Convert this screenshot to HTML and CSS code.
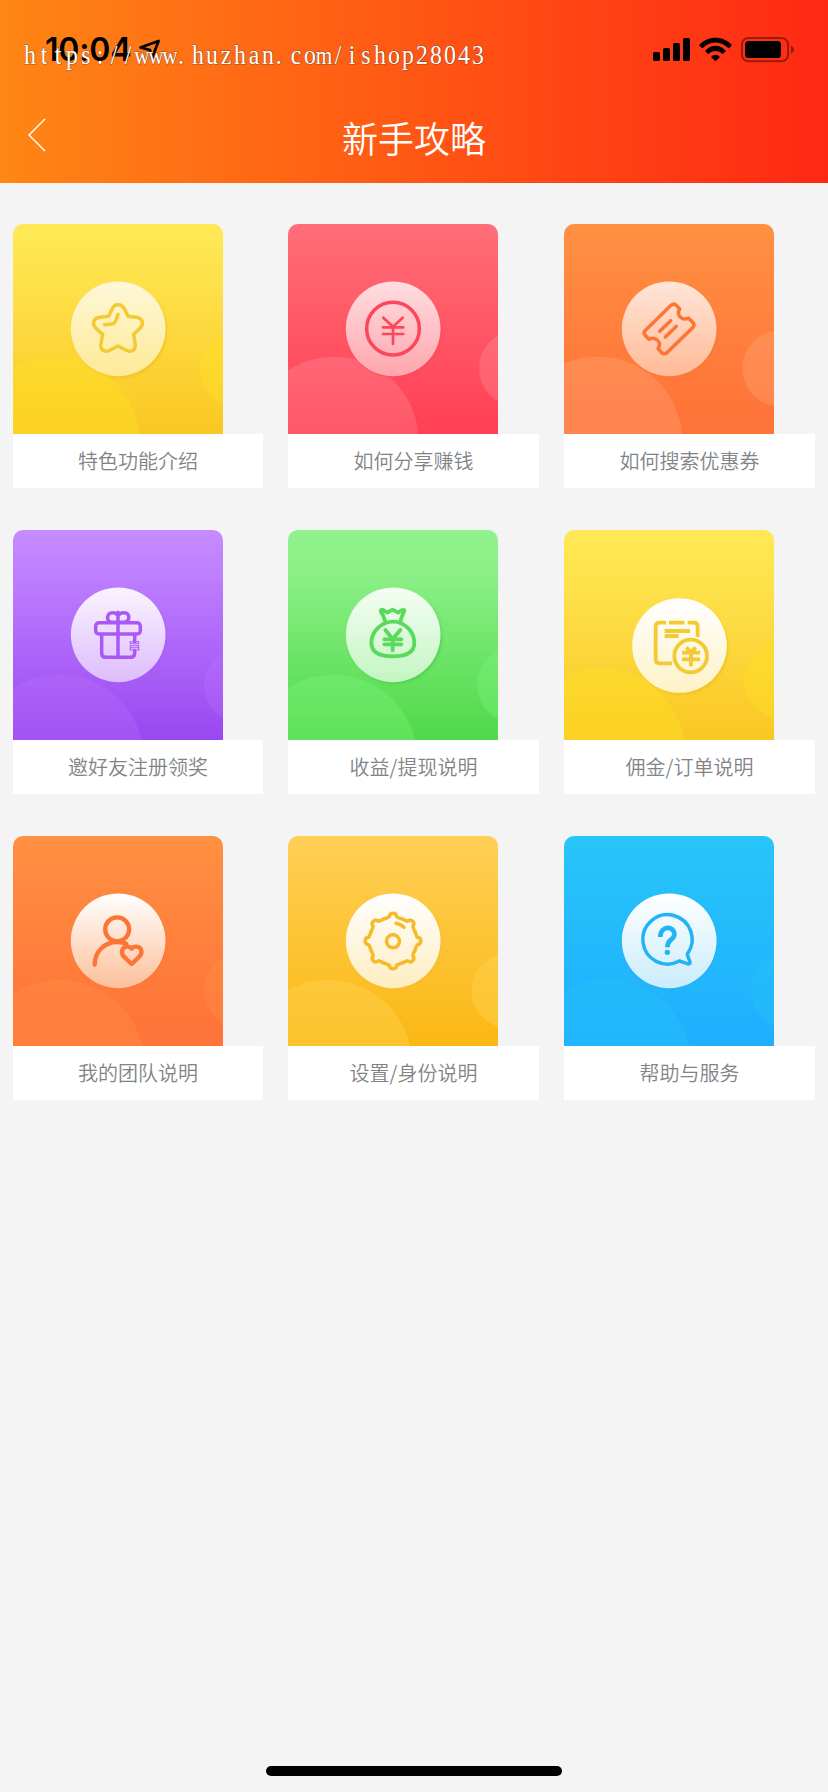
FILE: index.html
```
<!DOCTYPE html>
<html lang="zh-CN">
<head>
<meta charset="utf-8">
<title>新手攻略</title>
<link rel="stylesheet" href="styles.css">
</head>
<body>
<svg class="defs" width="0" height="0" aria-hidden="true">
  <defs>
    <linearGradient id="disc-soft" x1="0" y1="0" x2="0" y2="1"><stop offset="0" stop-color="#fff" stop-opacity=".8"/><stop offset="1" stop-color="#fff" stop-opacity=".46"/></linearGradient>
    <linearGradient id="disc-bright" x1="0" y1="0" x2="0" y2="1"><stop offset="0" stop-color="#fff" stop-opacity=".93"/><stop offset="1" stop-color="#fff" stop-opacity=".58"/></linearGradient>
    <linearGradient id="disc-white" x1="0" y1="0" x2="0" y2="1"><stop offset="0" stop-color="#fff"/><stop offset="1" stop-color="#fff" stop-opacity=".7"/></linearGradient>
    <linearGradient id="disc-warm" x1="0" y1="0" x2="0" y2="1"><stop offset="0" stop-color="#fff"/><stop offset="1" stop-color="#fcc09a"/></linearGradient>
    <filter id="soft" x="-20%" y="-20%" width="140%" height="140%"><feGaussianBlur stdDeviation="4"/></filter>
  </defs>
</svg>
<div class="page">
  <header class="header">
    <div class="status">
      <span class="time">10:04</span>
      <svg class="location" width="24" height="24" viewBox="0 0 24 24"><path d="M3.500 10.500 21.500 4 15 21.500 13 13Z"/></svg>
      <svg class="indicators" width="142" height="26" viewBox="0 0 142 26">
        <rect x="0" y="15" width="7" height="9" rx="1.6"/><rect x="10" y="11" width="7" height="13" rx="1.6"/><rect x="20" y="6" width="7" height="18" rx="1.6"/><rect x="30" y="1" width="7" height="23" rx="1.6"/>
        <path d="M46 8.2C54-1.9 71-1.9 79 8.2L75.7 11.5C68.5 3.5 56.500 3.500 49.300 11.500Z"/>
        <path d="M52 14C58 7 67 7 73 14L69.700 17.200C65.500 13 59.500 13 55.300 17.200Z"/>
        <path d="M58 20Q62.500 15.500 67 20L62.500 24.200Z"/>
        <rect class="battery-shell" x="88.900" y="1" width="46.200" height="23.200" rx="6.500"/><path class="battery-tip" d="M138 8.500Q141 10 141 12.700T138 17Z"/>
        <rect x="92" y="4" width="36" height="17" rx="3.500"/>
      </svg>
    </div>
    <svg class="watermark" width="464" height="36" viewBox="0 0 464 36">
      <text transform="scale(.85 1)" y="27" x="8.200 24.700 41.200 57.600 74.100 90.600 107.100 123.500 140 156.500 172.900 186 205.900 222.400 238.800 255.300 271.800 288.200 301 321.200 337.600 354.100 370.600 387.100 403.500 420 436.500 452.900 469.400 485.900 502.400 518.800 535.300">https://<tspan class="wide">www</tspan>.huzhan.co<tspan class="wide">m</tspan>/ishop28043</text>
    </svg>
    <nav class="nav">
      <svg class="back" width="18" height="34" viewBox="0 0 18 34"><path d="M17 1 1 17 17 33"/></svg>
      <h1 class="title">新手攻略</h1>
    </nav>
  </header>

  <main class="grid">
    <article class="card">
      <svg class="tile gold" viewBox="39 42 630 630">
        <g class="bubbles"><circle cx="165" cy="693" r="253"/><circle cx="714" cy="475" r="114"/></g>
        <circle class="shade" cx="360" cy="363" r="140"/><circle cx="354.500" cy="356.500" r="142" fill="#fdd83e"/><circle cx="354.500" cy="356.500" r="142" fill="url(#disc-soft)"/>
        <g class="icon"><path d="M354 284Q367 284 374 298L384 319 408 322Q426 324 427 338 428 349 418 357L401 373 406 405Q406 424 388 424 382 423 354 408 326 423 320 424 302 423 302 405L308 373 290 357Q279 347 281 338 282 324 300 322L326 319 336 298Q341 284 354 284Z"/><path d="M354 313Q348 335 341 341L314 344"/></g>
      </svg>
      <div class="label">特色功能介绍</div>
    </article>
    <article class="card">
      <svg class="tile red" viewBox="39 42 630 630">
        <g class="bubbles"><circle cx="178" cy="693" r="253"/><circle cx="726" cy="475" r="114"/></g>
        <circle class="shade" cx="360" cy="363" r="140"/><circle cx="354.500" cy="356.500" r="142" fill="#ff5968"/><circle cx="354.500" cy="356.500" r="142" fill="url(#disc-soft)"/>
        <g class="icon"><circle cx="354" cy="356" r="79"/><path class="thin" d="M325 323 354 350 383 323M354 350V402M324 352H385M324 372H385"/></g>
      </svg>
      <div class="label">如何分享赚钱</div>
    </article>
    <article class="card">
      <svg class="tile orange" viewBox="42 42 630 630">
        <g class="bubbles"><circle cx="144" cy="693" r="253"/><circle cx="691" cy="475" r="114"/></g>
        <circle class="shade" cx="363" cy="363" r="140"/><circle cx="357.500" cy="356.500" r="142" fill="#ff803f"/><circle cx="357.500" cy="356.500" r="142" fill="url(#disc-soft)"/>
        <g class="icon"><path d="M363 286Q371 279 379 286L389 297C378 314 395 334 415 324L428 337Q436 345 428 353L352 427Q343 435 335 428L324 416C337 397 317 378 297 388L285 375Q279 369 285 362Z"/><path d="M329 364 362 332M346 381 379 349"/></g>
      </svg>
      <div class="label">如何搜索优惠券</div>
    </article>

    <article class="card">
      <svg class="tile purple" viewBox="39 45 630 630">
        <g class="bubbles"><circle cx="179" cy="732" r="253"/><circle cx="726" cy="511" r="114"/></g>
        <circle class="shade" cx="360" cy="366" r="140"/><circle cx="354.500" cy="359.500" r="142" fill="#b061f8"/><circle cx="354.500" cy="359.500" r="142" fill="url(#disc-bright)"/>
        <g class="icon"><rect x="287" y="323" width="134" height="34" rx="10"/><path d="M305 359V415Q305 427 317 427H392Q404 427 404 414V407M404 359V380M354 292V427M354 322H334C316 319 321 292 338 293Q350 293 354 302 360 292 373 293C390 293 392 319 372 322Z"/><path class="hair" d="M390 380H417M392 386H414M390 392H417M392 398H414M390 405H417M391 380V386M416 380V386M391 392V405M416 392V405"/></g>
      </svg>
      <div class="label">邀好友注册领奖</div>
    </article>
    <article class="card">
      <svg class="tile green" viewBox="39 45 630 630">
        <g class="bubbles"><circle cx="174" cy="732" r="253"/><circle cx="720" cy="511" r="114"/></g>
        <circle class="shade" cx="360" cy="366" r="140"/><circle cx="354.500" cy="359.500" r="142" fill="#72e96d"/><circle cx="354.500" cy="359.500" r="142" fill="url(#disc-bright)"/>
        <g class="icon"><path d="M331 321Q327 302 318 291 314 283 324 285L337 293 353 284 369 293 382 285Q391 283 387 290 379 306 376 321M354 320C320 320 289 348 289 383 289 411 312 424 354 424S418 411 418 383C418 348 388 320 354 320Z"/><path d="M331 345 353 372 376 345M353 372V406M328 373H379M328 388H379"/></g>
      </svg>
      <div class="label">收益/提现说明</div>
    </article>
    <article class="card">
      <svg class="tile gold" viewBox="42 45 630 630">
        <g class="bubbles"><circle cx="152" cy="714" r="253"/><circle cx="697" cy="497" r="114"/></g>
        <circle class="shade" cx="394" cy="398" r="140"/><circle cx="388.500" cy="391.500" r="142" fill="#fbd543"/><circle cx="388.500" cy="391.500" r="142" fill="url(#disc-white)"/>
        <g class="icon butt"><path d="M348 323H329Q317 323 317 335V433Q317 445 329 445H366M357 323H403M413 323H432Q443 323 443 334V366"/><path d="M344 348H420M344 363H386"/><circle cx="422" cy="423" r="49"/><path d="M409 397 423 412 437 397M423 409V454M396 413H450M396 433H450"/></g>
      </svg>
      <div class="label">佣金/订单说明</div>
    </article>

    <article class="card">
      <svg class="tile orange faint" viewBox="39 48 630 630">
        <g class="bubbles"><circle cx="180" cy="732" r="253"/><circle cx="726" cy="511" r="114"/></g>
        <circle class="shade" cx="360" cy="369" r="140"/><circle cx="354.500" cy="362.500" r="142" fill="url(#disc-warm)"/>
        <g class="icon heavy"><circle cx="351.500" cy="328" r="36"/><path d="M284 434C284 393 316 366 351 366Q366 366 379 371M395 432 371 409C359 395 369 379 382 380Q391 380 395 386 400 379 410 380C424 381 430 396 418 410Z"/></g>
      </svg>
      <div class="label">我的团队说明</div>
    </article>
    <article class="card">
      <svg class="tile amber" viewBox="39 48 630 630">
        <g class="bubbles"><circle cx="158" cy="732" r="253"/><circle cx="704" cy="512" r="114"/></g>
        <circle class="shade" cx="360" cy="369" r="140"/><circle cx="354.500" cy="362.500" r="142" fill="#fdc437"/><circle cx="354.500" cy="362.500" r="142" fill="url(#disc-white)"/>
        <g class="icon">
          <path id="cog" d="M326 297Q334 295 343 290C344 276 364 276 365 290Q374 295 382 297"/>
          <use href="#cog" transform="rotate(45 354 363)"/><use href="#cog" transform="rotate(90 354 363)"/><use href="#cog" transform="rotate(135 354 363)"/><use href="#cog" transform="rotate(180 354 363)"/><use href="#cog" transform="rotate(225 354 363)"/><use href="#cog" transform="rotate(270 354 363)"/><use href="#cog" transform="rotate(315 354 363)"/>
          <circle cx="354" cy="364" r="19.500"/><path d="M363 310Q377 312 387 322"/>
        </g>
      </svg>
      <div class="label">设置/身份说明</div>
    </article>
    <article class="card">
      <svg class="tile blue" viewBox="42 48 630 630">
        <g class="bubbles"><circle cx="171" cy="732" r="253"/><circle cx="716" cy="511" r="114"/></g>
        <circle class="shade" cx="363" cy="369" r="140"/><circle cx="357.500" cy="362.500" r="142" fill="#4fc1f2"/><circle cx="357.500" cy="362.500" r="142" fill="url(#disc-white)"/>
        <g class="icon"><path d="M412 402A74 74 0 1 0 388 423L412 431Q421 434 420 425 414 413 412 402Z"/><path class="query" d="M331 351C331 315 374 316 373 344 372 361 352 356 352 382"/><circle class="dot" cx="352" cy="397" r="8"/></g>
      </svg>
      <div class="label">帮助与服务</div>
    </article>
  </main>
  <div class="home-bar"></div>
</div>
</body>
</html>
```
FILE: styles.css
```
body {
  margin: 0;
  background: #f4f4f4;
  font-family: "Liberation Sans", "Noto Sans CJK SC", sans-serif;
}
.defs { position: absolute; }
.page {
  display: flex;
  flex-direction: column;
  box-sizing: border-box;
  height: 1792px;
  padding-bottom: 16px;
}
.header {
  position: relative;
  height: 183px;
  background: linear-gradient(90deg, #ff8614, #ff2814);
}
.status {
  display: flex;
  align-items: flex-start;
  box-sizing: border-box;
  height: 90px;
  padding: 37px 33px 0 45px;
}
.time {
  width: 92px;
  font: 600 32px/26px Inter, sans-serif;
  letter-spacing: -0.2px;
}
.location { fill: none; stroke: #000; stroke-width: 2.8; stroke-linejoin: round; }
.indicators { margin-left: auto; }
.battery-shell { fill: none; stroke: #000; stroke-width: 2; opacity: .4; }
.battery-tip { opacity: .4; }
.watermark { position: absolute; left: 23px; top: 37px; }
.watermark text {
  font: 28px "Liberation Serif", serif;
  text-anchor: middle;
  fill: #fff;
  stroke: rgba(90, 60, 45, .6);
  stroke-width: 1.2px;
  paint-order: stroke;
}
.watermark .wide { font-size: 25px; }
.nav {
  display: grid;
  grid-template-columns: 28px 1fr 28px;
  align-items: start;
  padding: 28px 28px 0;
}
.back { fill: none; stroke: #fff; stroke-width: 1.5; }
.title {
  margin: -2px 0 0;
  color: #fff;
  font: 400 36px/42px "Noto Sans CJK SC DemiLight", "Noto Sans CJK SC", sans-serif;
  text-align: center;
}
.grid {
  display: grid;
  grid-template-columns: 250px 251px 251px;
  gap: 42px 25px;
  padding: 41px 13px 0;
}
.tile {
  display: block;
  width: 210px;
  height: 210px;
  border-radius: 10px 10px 0 0;
}
.label {
  height: 54px;
  background: #fff;
  color: #818487;
  font: 400 20px/54px "Noto Sans CJK SC DemiLight", "Noto Sans CJK SC", sans-serif;
  text-align: center;
}
.icon {
  fill: none;
  stroke: var(--ink);
  stroke-width: 10.5;
  stroke-linecap: round;
  stroke-linejoin: round;
}
.icon.butt { stroke-linecap: butt; stroke-width: 11.5; }
.icon.heavy { stroke-width: 13; }
.green .icon { stroke-width: 11.5; }
.thin { stroke-width: 8; }
.hair { stroke-width: 3.2; }
.query { stroke-width: 14; stroke-linecap: butt; }
.dot { fill: var(--ink); stroke: none; }
.bubbles { fill: var(--bubble); }
.shade { fill: var(--ink); opacity: .7; filter: url(#soft); }
.gold { --ink: #f4ca34; --bubble: rgba(255, 226, 36, .4); background: linear-gradient(#ffe853 5%, #fee04a 30%, #fac722); }
.gold .shade { fill: #eebb18; }
.red { --ink: #fb465b; --bubble: rgba(255, 255, 255, .13); background: linear-gradient(#ff6e78, #ff3f54); }
.orange { --ink: #fd7535; --bubble: rgba(255, 255, 255, .12); background: linear-gradient(#ff9042, #ff7438 90%); }
.faint { --bubble: rgba(255, 150, 70, .3); }
.purple { --ink: #a958f7; --bubble: rgba(200, 125, 255, .22); background: linear-gradient(#c68cff, #bd7eff 22%, #9947f0); }
.green { --ink: #58da5a; --bubble: rgba(130, 250, 130, .3); background: linear-gradient(#92f28d, #8aef85 22%, #4fd949); }
.green .shade { fill: #45c845; }
.amber { --ink: #f6bb2a; --bubble: rgba(255, 218, 95, .34); background: linear-gradient(#ffcf56, #fbb814); }
.blue { --ink: #20b3f5; --bubble: rgba(40, 200, 250, .3); background: linear-gradient(#27c5f9, #20aeff); }
.home-bar {
  align-self: center;
  width: 296px;
  height: 10px;
  margin-top: auto;
  border-radius: 5px;
  background: #000;
}
```
